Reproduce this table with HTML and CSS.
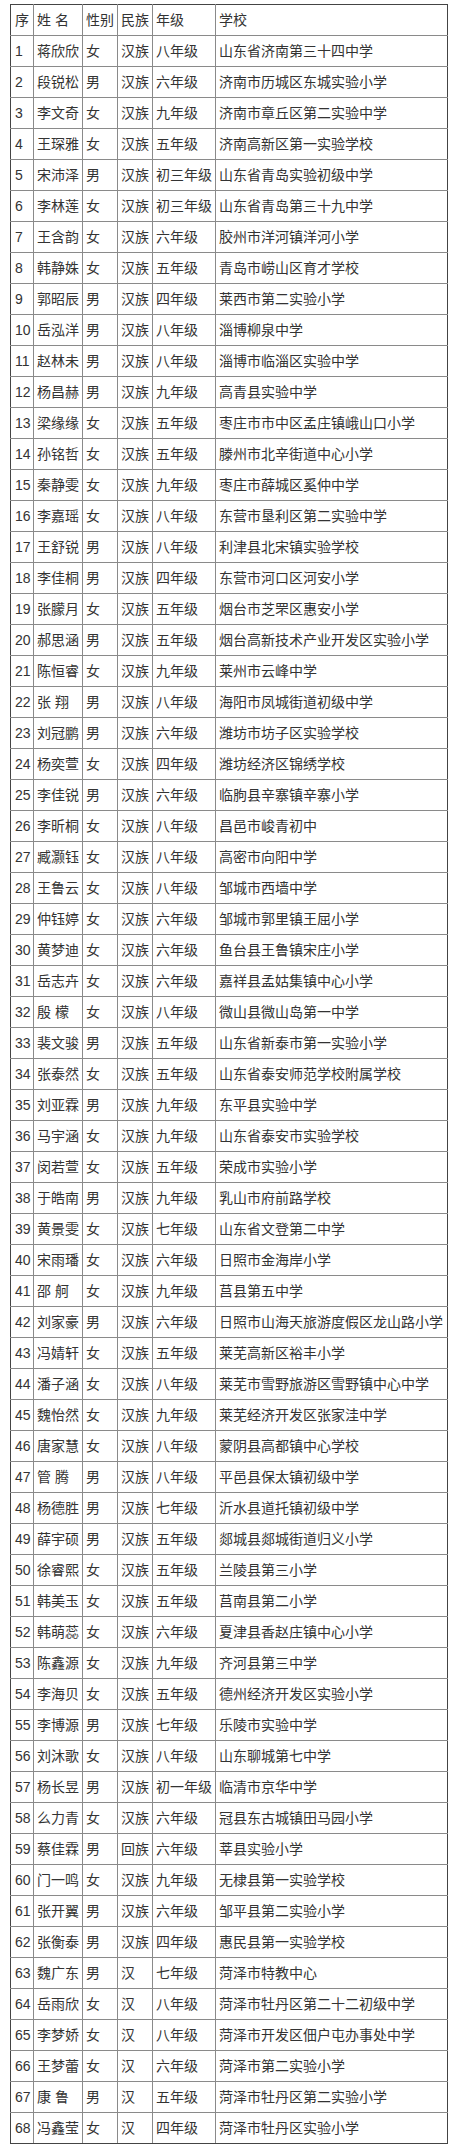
FILE: index.html
```html
<!DOCTYPE html>
<html lang="zh-CN">
<head>
<meta charset="utf-8">
<title>名单</title>
<link rel="stylesheet" href="styles.css">
</head>
<body>
<table class="list">
<colgroup>
<col class="c-no"><col class="c-name"><col class="c-sex"><col class="c-nat"><col class="c-grade"><col class="c-school">
</colgroup>
<tbody>
<tr><td>序</td><td>姓 名</td><td>性别</td><td>民族</td><td>年级</td><td>学校</td></tr>
<tr><td>1</td><td>蒋欣欣</td><td>女</td><td>汉族</td><td>八年级</td><td>山东省济南第三十四中学</td></tr>
<tr><td>2</td><td>段锐松</td><td>男</td><td>汉族</td><td>六年级</td><td>济南市历城区东城实验小学</td></tr>
<tr><td>3</td><td>李文奇</td><td>女</td><td>汉族</td><td>九年级</td><td>济南市章丘区第二实验中学</td></tr>
<tr><td>4</td><td>王琛雅</td><td>女</td><td>汉族</td><td>五年级</td><td>济南高新区第一实验学校</td></tr>
<tr><td>5</td><td>宋沛泽</td><td>男</td><td>汉族</td><td>初三年级</td><td>山东省青岛实验初级中学</td></tr>
<tr><td>6</td><td>李林莲</td><td>女</td><td>汉族</td><td>初三年级</td><td>山东省青岛第三十九中学</td></tr>
<tr><td>7</td><td>王含韵</td><td>女</td><td>汉族</td><td>六年级</td><td>胶州市洋河镇洋河小学</td></tr>
<tr><td>8</td><td>韩静姝</td><td>女</td><td>汉族</td><td>五年级</td><td>青岛市崂山区育才学校</td></tr>
<tr><td>9</td><td>郭昭辰</td><td>男</td><td>汉族</td><td>四年级</td><td>莱西市第二实验小学</td></tr>
<tr><td>10</td><td>岳泓洋</td><td>男</td><td>汉族</td><td>八年级</td><td>淄博柳泉中学</td></tr>
<tr><td>11</td><td>赵林未</td><td>男</td><td>汉族</td><td>八年级</td><td>淄博市临淄区实验中学</td></tr>
<tr><td>12</td><td>杨昌赫</td><td>男</td><td>汉族</td><td>九年级</td><td>高青县实验中学</td></tr>
<tr><td>13</td><td>梁缘缘</td><td>女</td><td>汉族</td><td>五年级</td><td>枣庄市市中区孟庄镇峨山口小学</td></tr>
<tr><td>14</td><td>孙铭哲</td><td>女</td><td>汉族</td><td>五年级</td><td>滕州市北辛街道中心小学</td></tr>
<tr><td>15</td><td>秦静雯</td><td>女</td><td>汉族</td><td>九年级</td><td>枣庄市薛城区奚仲中学</td></tr>
<tr><td>16</td><td>李嘉瑶</td><td>女</td><td>汉族</td><td>八年级</td><td>东营市垦利区第二实验中学</td></tr>
<tr><td>17</td><td>王舒锐</td><td>男</td><td>汉族</td><td>八年级</td><td>利津县北宋镇实验学校</td></tr>
<tr><td>18</td><td>李佳桐</td><td>男</td><td>汉族</td><td>四年级</td><td>东营市河口区河安小学</td></tr>
<tr><td>19</td><td>张朦月</td><td>女</td><td>汉族</td><td>五年级</td><td>烟台市芝罘区惠安小学</td></tr>
<tr><td>20</td><td>郝思涵</td><td>男</td><td>汉族</td><td>五年级</td><td>烟台高新技术产业开发区实验小学</td></tr>
<tr><td>21</td><td>陈恒睿</td><td>女</td><td>汉族</td><td>九年级</td><td>莱州市云峰中学</td></tr>
<tr><td>22</td><td>张 翔</td><td>男</td><td>汉族</td><td>八年级</td><td>海阳市凤城街道初级中学</td></tr>
<tr><td>23</td><td>刘冠鹏</td><td>男</td><td>汉族</td><td>六年级</td><td>潍坊市坊子区实验学校</td></tr>
<tr><td>24</td><td>杨奕萱</td><td>女</td><td>汉族</td><td>四年级</td><td>潍坊经济区锦绣学校</td></tr>
<tr><td>25</td><td>李佳锐</td><td>男</td><td>汉族</td><td>六年级</td><td>临朐县辛寨镇辛寨小学</td></tr>
<tr><td>26</td><td>李昕桐</td><td>女</td><td>汉族</td><td>八年级</td><td>昌邑市峻青初中</td></tr>
<tr><td>27</td><td>臧灏钰</td><td>女</td><td>汉族</td><td>八年级</td><td>高密市向阳中学</td></tr>
<tr><td>28</td><td>王鲁云</td><td>女</td><td>汉族</td><td>八年级</td><td>邹城市西墙中学</td></tr>
<tr><td>29</td><td>仲钰婷</td><td>女</td><td>汉族</td><td>六年级</td><td>邹城市郭里镇王屈小学</td></tr>
<tr><td>30</td><td>黄梦迪</td><td>女</td><td>汉族</td><td>六年级</td><td>鱼台县王鲁镇宋庄小学</td></tr>
<tr><td>31</td><td>岳志卉</td><td>女</td><td>汉族</td><td>六年级</td><td>嘉祥县孟姑集镇中心小学</td></tr>
<tr><td>32</td><td>殷 檬</td><td>女</td><td>汉族</td><td>八年级</td><td>微山县微山岛第一中学</td></tr>
<tr><td>33</td><td>裴文骏</td><td>男</td><td>汉族</td><td>五年级</td><td>山东省新泰市第一实验小学</td></tr>
<tr><td>34</td><td>张泰然</td><td>女</td><td>汉族</td><td>五年级</td><td>山东省泰安师范学校附属学校</td></tr>
<tr><td>35</td><td>刘亚霖</td><td>男</td><td>汉族</td><td>九年级</td><td>东平县实验中学</td></tr>
<tr><td>36</td><td>马宇涵</td><td>女</td><td>汉族</td><td>九年级</td><td>山东省泰安市实验学校</td></tr>
<tr><td>37</td><td>闵若萱</td><td>女</td><td>汉族</td><td>五年级</td><td>荣成市实验小学</td></tr>
<tr><td>38</td><td>于皓南</td><td>男</td><td>汉族</td><td>九年级</td><td>乳山市府前路学校</td></tr>
<tr><td>39</td><td>黄景雯</td><td>女</td><td>汉族</td><td>七年级</td><td>山东省文登第二中学</td></tr>
<tr><td>40</td><td>宋雨璠</td><td>女</td><td>汉族</td><td>六年级</td><td>日照市金海岸小学</td></tr>
<tr><td>41</td><td>邵 舸</td><td>女</td><td>汉族</td><td>九年级</td><td>莒县第五中学</td></tr>
<tr><td>42</td><td>刘家豪</td><td>男</td><td>汉族</td><td>六年级</td><td>日照市山海天旅游度假区龙山路小学</td></tr>
<tr><td>43</td><td>冯婧轩</td><td>女</td><td>汉族</td><td>五年级</td><td>莱芜高新区裕丰小学</td></tr>
<tr><td>44</td><td>潘子涵</td><td>女</td><td>汉族</td><td>八年级</td><td>莱芜市雪野旅游区雪野镇中心中学</td></tr>
<tr><td>45</td><td>魏怡然</td><td>女</td><td>汉族</td><td>九年级</td><td>莱芜经济开发区张家洼中学</td></tr>
<tr><td>46</td><td>唐家慧</td><td>女</td><td>汉族</td><td>八年级</td><td>蒙阴县高都镇中心学校</td></tr>
<tr><td>47</td><td>管 腾</td><td>男</td><td>汉族</td><td>八年级</td><td>平邑县保太镇初级中学</td></tr>
<tr><td>48</td><td>杨德胜</td><td>男</td><td>汉族</td><td>七年级</td><td>沂水县道托镇初级中学</td></tr>
<tr><td>49</td><td>薛宇硕</td><td>男</td><td>汉族</td><td>五年级</td><td>郯城县郯城街道归义小学</td></tr>
<tr><td>50</td><td>徐睿熙</td><td>女</td><td>汉族</td><td>五年级</td><td>兰陵县第三小学</td></tr>
<tr><td>51</td><td>韩美玉</td><td>女</td><td>汉族</td><td>五年级</td><td>莒南县第二小学</td></tr>
<tr><td>52</td><td>韩萌蕊</td><td>女</td><td>汉族</td><td>六年级</td><td>夏津县香赵庄镇中心小学</td></tr>
<tr><td>53</td><td>陈鑫源</td><td>女</td><td>汉族</td><td>九年级</td><td>齐河县第三中学</td></tr>
<tr><td>54</td><td>李海贝</td><td>女</td><td>汉族</td><td>五年级</td><td>德州经济开发区实验小学</td></tr>
<tr><td>55</td><td>李博源</td><td>男</td><td>汉族</td><td>七年级</td><td>乐陵市实验中学</td></tr>
<tr><td>56</td><td>刘沐歌</td><td>女</td><td>汉族</td><td>八年级</td><td>山东聊城第七中学</td></tr>
<tr><td>57</td><td>杨长昱</td><td>男</td><td>汉族</td><td>初一年级</td><td>临清市京华中学</td></tr>
<tr><td>58</td><td>么力青</td><td>女</td><td>汉族</td><td>六年级</td><td>冠县东古城镇田马园小学</td></tr>
<tr><td>59</td><td>蔡佳霖</td><td>男</td><td>回族</td><td>六年级</td><td>莘县实验小学</td></tr>
<tr><td>60</td><td>门一鸣</td><td>女</td><td>汉族</td><td>九年级</td><td>无棣县第一实验学校</td></tr>
<tr><td>61</td><td>张开翼</td><td>男</td><td>汉族</td><td>六年级</td><td>邹平县第二实验小学</td></tr>
<tr><td>62</td><td>张衡泰</td><td>男</td><td>汉族</td><td>四年级</td><td>惠民县第一实验学校</td></tr>
<tr><td>63</td><td>魏广东</td><td>男</td><td>汉</td><td>七年级</td><td>菏泽市特教中心</td></tr>
<tr><td>64</td><td>岳雨欣</td><td>女</td><td>汉</td><td>八年级</td><td>菏泽市牡丹区第二十二初级中学</td></tr>
<tr><td>65</td><td>李梦娇</td><td>女</td><td>汉</td><td>八年级</td><td>菏泽市开发区佃户屯办事处中学</td></tr>
<tr><td>66</td><td>王梦蕾</td><td>女</td><td>汉</td><td>六年级</td><td>菏泽市第二实验小学</td></tr>
<tr><td>67</td><td>康 鲁</td><td>男</td><td>汉</td><td>五年级</td><td>菏泽市牡丹区第二实验小学</td></tr>
<tr><td>68</td><td>冯鑫莹</td><td>女</td><td>汉</td><td>四年级</td><td>菏泽市牡丹区实验小学</td></tr>
</tbody>
</table>
</body>
</html>
```

FILE: styles.css
```css
html, body {
  margin: 0;
  padding: 0;
  background: #ffffff;
}

body {
  padding: 4px 0 0 10px;
  font-family: "Liberation Sans", "Noto Sans CJK SC", sans-serif;
  font-size: 14px;
  color: #333333;
}

.list {
  border-collapse: collapse;
  table-layout: fixed;
  width: 437px;
}

.c-no { width: 23px; }
.c-name { width: 49px; }
.c-sex { width: 35px; }
.c-nat { width: 35px; }
.c-grade { width: 63px; }
.c-school { width: 232px; }

.list td {
  height: 30px;
  padding: 0 0 0 3px;
  border: 1px solid #8a8a8a;
  line-height: 30px;
  vertical-align: middle;
  white-space: nowrap;
  overflow: hidden;
}

.list tr:first-child td { border-top-color: #444444; }
.list tr:last-child td { border-bottom-color: #444444; }
.list td:first-child { border-left-color: #444444; padding-left: 4px; }
.list td:last-child { border-right-color: #444444; }
```
